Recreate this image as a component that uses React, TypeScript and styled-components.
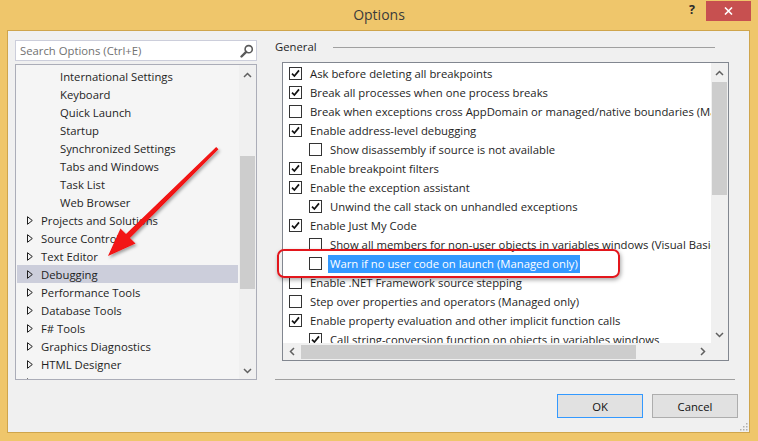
import React from 'react';
import styled, { createGlobalStyle } from 'styled-components';

const FONT = `"Open Sans", "Noto Sans", sans-serif`;

const GlobalStyle = createGlobalStyle`
  html, body { margin: 0; padding: 0; background: #EFC66B; }
  body { font-family: ${FONT}; }
  * { box-sizing: border-box; }
`;

const Window = styled.div`
  position: relative;
  width: 758px;
  height: 441px;
  background: #efc66b;
  display: flex;
  flex-direction: column;
  overflow: hidden;
  font-family: ${FONT};
  font-size: 11.3px;
  color: #1e1e1e;
`;

const TitleBar = styled.div`
  height: 30px;
  flex: none;
  display: grid;
  grid-template-columns: 1fr auto 1fr;
`;

const Title = styled.div`
  grid-column: 2;
  font-size: 14px;
  color: #3b3b3b;
  line-height: 30px;
`;

const TitleControls = styled.div`
  grid-column: 3;
  display: flex;
  justify-content: flex-end;
  align-items: flex-start;
  padding-right: 7px;
`;

const HelpMark = styled.div`
  font-size: 12.5px;
  font-weight: 700;
  color: #2b2b2b;
  line-height: 14px;
  margin-top: 3px;
  margin-right: 11px;
`;

const CloseButton = styled.div`
  width: 45px;
  height: 20px;
  margin-top: 1px;
  background: #c75050;
  display: flex;
  align-items: center;
  justify-content: center;
`;

const Client = styled.div`
  flex: 1;
  margin: 0 8px 8px 7px;
  background: #f0f0f0;
  border: 1px solid #cfa54c;
  position: relative;
  display: flex;
  flex-direction: column;
  padding: 9px 11px 0 7px;
`;

const Main = styled.div`
  display: flex;
  height: 340px;
`;

const LeftCol = styled.div`
  width: 242px;
  display: flex;
  flex-direction: column;
`;

const SearchBox = styled.div`
  height: 21px;
  flex: none;
  border: 1px solid #cccedb;
  background: #fff;
  display: flex;
  align-items: center;
  justify-content: space-between;
  padding: 0 2px 0 4px;
  color: #717171;
`;

const Tree = styled.div`
  margin-top: 3px;
  flex: 1;
  border: 1px solid #abadb8;
  background: #f5f5f5;
  display: flex;
  min-height: 0;
`;

const TreeRows = styled.div`
  flex: 1;
  overflow: hidden;
  padding-top: 2px;
`;

const TreeRow = styled.div<{ $selected?: boolean }>`
  height: 18px;
  margin: 0 1px;
  display: flex;
  align-items: center;
  white-space: nowrap;
  background: ${(p) => (p.$selected ? '#cccedb' : 'transparent')};
`;

const Expander = styled.span<{ $child?: boolean }>`
  width: ${(p) => (p.$child ? '43px' : '24px')};
  flex: none;
  display: flex;
  align-items: center;
  padding-left: 10px;
`;

const Scrollbar = styled.div`
  width: 17px;
  flex: none;
  background: #f0f0f0;
  display: flex;
  flex-direction: column;
`;

const ScrollBtn = styled.div<{ $pad?: number }>`
  height: 17px;
  flex: none;
  display: flex;
  align-items: center;
  justify-content: center;
  padding-top: ${(p) => p.$pad ?? 0}px;
`;

const VTrack = styled.div`
  flex: 1;
  display: flex;
  flex-direction: column;
`;

const VThumb = styled.div<{ $top: number; $height: number }>`
  margin: ${(p) => p.$top}px 1px 0 1px;
  height: ${(p) => p.$height}px;
  background: #cdcdcd;
`;

const RightCol = styled.div`
  flex: 1;
  margin-left: 18px;
  display: flex;
  flex-direction: column;
`;

const GroupHeader = styled.div`
  height: 14px;
  display: flex;
  align-items: center;
`;

const GroupLabel = styled.span`
  line-height: 14px;
  color: #1e1e1e;
`;

const GroupRule = styled.div`
  flex: 1;
  height: 1px;
  background: #a0a0a0;
  margin: 0 23px 0 16px;
`;

const ListBox = styled.div`
  margin: 8px 9px 0 7px;
  height: 299px;
  border: 1px solid #828790;
  background: #fff;
  display: grid;
  grid-template-columns: 1fr 17px;
  grid-template-rows: 1fr 17px;
`;

const ListRows = styled.div`
  overflow: hidden;
  padding: 1px 0 0 6px;
  min-width: 0;
`;

const OptionRow = styled.div<{ $indent: number }>`
  height: 19px;
  display: flex;
  align-items: center;
  white-space: nowrap;
  padding-left: ${(p) => p.$indent * 20}px;
`;

const CheckBox = styled.span`
  width: 13px;
  height: 13px;
  flex: none;
  border: 1px solid #333;
  background: #fff;
  margin-right: 8px;
  display: flex;
  align-items: center;
  justify-content: center;
`;

const OptionLabel = styled.span<{ $selected?: boolean }>`
  line-height: 18px;
  padding: 0 2px;
  margin-left: -2px;
  background: ${(p) => (p.$selected ? '#3399ff' : 'transparent')};
  color: ${(p) => (p.$selected ? '#fff' : '#1e1e1e')};
`;

const HScroll = styled.div`
  background: #f0f0f0;
  display: flex;
`;

const HBtn = styled.div`
  width: 17px;
  flex: none;
  display: flex;
  align-items: center;
  justify-content: center;
`;

const HTrack = styled.div`
  flex: 1;
  display: flex;
  align-items: center;
`;

const HThumb = styled.div`
  margin-left: 1px;
  width: 335px;
  height: 14px;
  background: #cdcdcd;
`;

const Corner = styled.div`
  background: #f0f0f0;
`;

const Separator = styled.div`
  margin-top: 18px;
  height: 1px;
  background: #a0a0a0;
  margin-right: 3px;
`;

const Footer = styled.div`
  display: flex;
  justify-content: flex-end;
  gap: 9px;
  margin-top: 14px;
`;

const Button = styled.div<{ $default?: boolean }>`
  width: 86px;
  height: 24px;
  background: #e1e1e1;
  border: 1px solid ${(p) => (p.$default ? '#3399ff' : '#adadad')};
  display: flex;
  align-items: center;
  justify-content: center;
  color: #111;
`;

const Grip = styled.svg`
  position: absolute;
  right: 1px;
  bottom: 1px;
`;

const Callout = styled.div`
  position: absolute;
  left: 277px;
  top: 249px;
  width: 343px;
  height: 29px;
  border: 2px solid #e3161c;
  border-radius: 7px;
  box-shadow: 1px 2px 4px rgba(0, 0, 0, 0.35);
  pointer-events: none;
`;

const ArrowSvg = styled.svg`
  position: absolute;
  left: 96px;
  top: 140px;
  overflow: visible;
  pointer-events: none;
`;

const ChevronUp = () => (
  <svg width="9" height="6" viewBox="0 0 9 6">
    <path d="M1 5 L4.5 1.5 L8 5" fill="none" stroke="#606060" strokeWidth="1.5" />
  </svg>
);
const ChevronDown = () => (
  <svg width="9" height="6" viewBox="0 0 9 6">
    <path d="M1 1 L4.5 4.5 L8 1" fill="none" stroke="#606060" strokeWidth="1.5" />
  </svg>
);
const ChevronLeft = () => (
  <svg width="6" height="9" viewBox="0 0 6 9">
    <path d="M5 1 L1.5 4.5 L5 8" fill="none" stroke="#606060" strokeWidth="1.5" />
  </svg>
);
const ChevronRight = () => (
  <svg width="6" height="9" viewBox="0 0 6 9">
    <path d="M1 1 L4.5 4.5 L1 8" fill="none" stroke="#606060" strokeWidth="1.5" />
  </svg>
);

const Triangle = () => (
  <svg width="6" height="9" viewBox="0 0 6 9">
    <path d="M0.5 0.7 L5.3 4.5 L0.5 8.3 Z" fill="none" stroke="#1e1e1e" strokeWidth="1" />
  </svg>
);

const CheckMark = () => (
  <svg width="9" height="9" viewBox="0 0 9 9">
    <path d="M1 4.6 L3.4 7 L8 1.4" fill="none" stroke="#111" strokeWidth="1.7" />
  </svg>
);

const SearchIcon = () => (
  <svg width="14" height="14" viewBox="0 0 14 14">
    <circle cx="8.7" cy="5.2" r="3.6" fill="none" stroke="#5a5a5a" strokeWidth="1.6" />
    <path d="M6.2 7.8 L1.5 12.5" stroke="#5a5a5a" strokeWidth="2.4" strokeLinecap="round" />
  </svg>
);

type TreeItem = { label: string; child?: boolean; selected?: boolean };
const treeItems: TreeItem[] = [
  { label: 'International Settings', child: true },
  { label: 'Keyboard', child: true },
  { label: 'Quick Launch', child: true },
  { label: 'Startup', child: true },
  { label: 'Synchronized Settings', child: true },
  { label: 'Tabs and Windows', child: true },
  { label: 'Task List', child: true },
  { label: 'Web Browser', child: true },
  { label: 'Projects and Solutions' },
  { label: 'Source Control' },
  { label: 'Text Editor' },
  { label: 'Debugging', selected: true },
  { label: 'Performance Tools' },
  { label: 'Database Tools' },
  { label: 'F# Tools' },
  { label: 'Graphics Diagnostics' },
  { label: 'HTML Designer' },
  { label: 'NuGet Package Manager' },
];

type Opt = { label: string; checked: boolean; indent: number; selected?: boolean };
const options: Opt[] = [
  { label: 'Ask before deleting all breakpoints', checked: true, indent: 0 },
  { label: 'Break all processes when one process breaks', checked: true, indent: 0 },
  { label: 'Break when exceptions cross AppDomain or managed/native boundaries (Managed only)', checked: false, indent: 0 },
  { label: 'Enable address-level debugging', checked: true, indent: 0 },
  { label: 'Show disassembly if source is not available', checked: false, indent: 1 },
  { label: 'Enable breakpoint filters', checked: true, indent: 0 },
  { label: 'Enable the exception assistant', checked: true, indent: 0 },
  { label: 'Unwind the call stack on unhandled exceptions', checked: true, indent: 1 },
  { label: 'Enable Just My Code', checked: true, indent: 0 },
  { label: 'Show all members for non-user objects in variables windows (Visual Basic only)', checked: false, indent: 1 },
  { label: 'Warn if no user code on launch (Managed only)', checked: false, indent: 1, selected: true },
  { label: 'Enable .NET Framework source stepping', checked: false, indent: 0 },
  { label: 'Step over properties and operators (Managed only)', checked: false, indent: 0 },
  { label: 'Enable property evaluation and other implicit function calls', checked: true, indent: 0 },
  { label: 'Call string-conversion function on objects in variables windows', checked: true, indent: 1 },
];

export default function App() {
  return (
    <>
      <GlobalStyle />
      <Window>
        <TitleBar>
          <Title>Options</Title>
          <TitleControls>
            <HelpMark>?</HelpMark>
            <CloseButton>
              <svg width="9" height="8" viewBox="0 0 9 8">
                <path d="M1 0.5 L8 7.5 M8 0.5 L1 7.5" stroke="#fff" strokeWidth="1.6" />
              </svg>
            </CloseButton>
          </TitleControls>
        </TitleBar>
        <Client>
          <Main>
            <LeftCol>
              <SearchBox>
                <span>Search Options (Ctrl+E)</span>
                <SearchIcon />
              </SearchBox>
              <Tree>
                <TreeRows>
                  {treeItems.map((t) => (
                    <TreeRow key={t.label} $selected={t.selected}>
                      <Expander $child={t.child}>{!t.child && <Triangle />}</Expander>
                      <span>{t.label}</span>
                    </TreeRow>
                  ))}
                </TreeRows>
                <Scrollbar>
                  <ScrollBtn $pad={3}>
                    <ChevronUp />
                  </ScrollBtn>
                  <VTrack>
                    <VThumb $top={74} $height={133} />
                  </VTrack>
                  <ScrollBtn>
                    <ChevronDown />
                  </ScrollBtn>
                </Scrollbar>
              </Tree>
            </LeftCol>
            <RightCol>
              <GroupHeader>
                <GroupLabel>General</GroupLabel>
                <GroupRule />
              </GroupHeader>
              <ListBox>
                <ListRows>
                  {options.map((o) => (
                    <OptionRow key={o.label} $indent={o.indent}>
                      <CheckBox>{o.checked && <CheckMark />}</CheckBox>
                      <OptionLabel $selected={o.selected}>{o.label}</OptionLabel>
                    </OptionRow>
                  ))}
                </ListRows>
                <Scrollbar>
                  <ScrollBtn $pad={3}>
                    <ChevronUp />
                  </ScrollBtn>
                  <VTrack>
                    <VThumb $top={2} $height={113} />
                  </VTrack>
                  <ScrollBtn>
                    <ChevronDown />
                  </ScrollBtn>
                </Scrollbar>
                <HScroll>
                  <HBtn>
                    <ChevronLeft />
                  </HBtn>
                  <HTrack>
                    <HThumb />
                  </HTrack>
                  <HBtn>
                    <ChevronRight />
                  </HBtn>
                </HScroll>
                <Corner />
              </ListBox>
              <Separator />
            </RightCol>
          </Main>
          <Footer>
            <Button $default>OK</Button>
            <Button>Cancel</Button>
          </Footer>
          <Grip width="9" height="9" viewBox="0 0 9 9">
            {[
              [7, 1],
              [7, 4],
              [4, 4],
              [7, 7],
              [4, 7],
              [1, 7],
            ].map(([x, y]) => (
              <rect key={`${x}-${y}`} x={x} y={y} width="1.5" height="1.5" fill="#b0b0b0" />
            ))}
          </Grip>
        </Client>
        <Callout />
        <ArrowSvg width="130" height="125" viewBox="96 140 130 125">
          <defs>
            <filter id="arrowShadow" x="-20%" y="-20%" width="140%" height="140%">
              <feDropShadow dx="1.5" dy="2" stdDeviation="1.6" floodColor="#000" floodOpacity="0.35" />
            </filter>
          </defs>
          <polygon
            points="108,256 120.5,228.5 126,234 216.2,147 218.4,149.2 130,238 135.5,243.5"
            fill="#f21212"
            filter="url(#arrowShadow)"
          />
        </ArrowSvg>
      </Window>
    </>
  );
}
